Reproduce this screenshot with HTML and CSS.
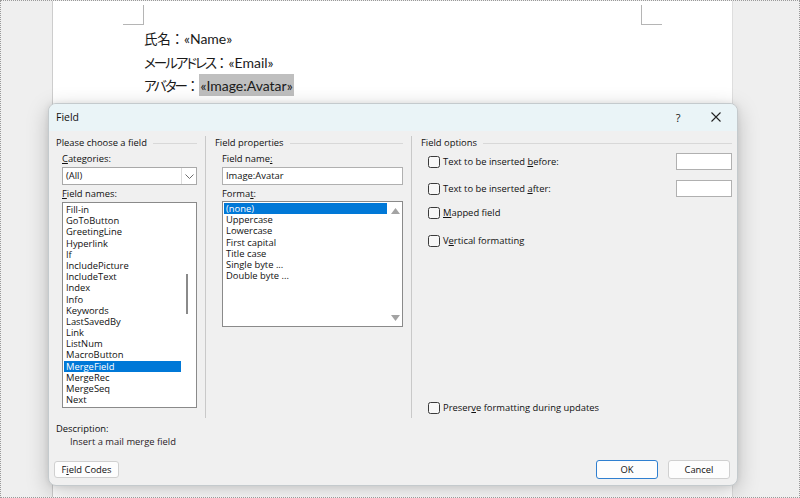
FILE: index.html
```html
<!DOCTYPE html>
<html lang="ja">
<head>
<meta charset="utf-8">
<title>Field</title>
<link rel="stylesheet" href="styles.css">
</head>
<body>
<div class="screen">
  <div class="page">
    <div class="marks"><span class="mark mark-l"></span><span class="mark mark-r"></span></div>
    <div class="doc">
      <p><span class="kanji">氏名</span><span class="colon">：</span>«Name»</p>
      <p><span class="kana">メールアドレス</span><span class="colon">：</span>«Email»</p>
      <p><span class="kana">アバター</span><span class="colon">：</span><span class="hl">«Image:Avatar»</span></p>
    </div>
  </div>

  <div class="dialog">
    <div class="titlebar">
      <span class="title">Field</span>
      <span class="tb-btn help">?</span>
      <span class="tb-btn close"><svg width="10" height="10" viewBox="0 0 10 10"><path d="M0.5 0.5 L9.5 9.5 M9.5 0.5 L0.5 9.5" stroke="#222" stroke-width="1.1" fill="none"/></svg></span>
    </div>
    <div class="body">
      <div class="cols">
        <div class="col col1">
          <div class="grp-head"><span>Please choose a field</span><i></i></div>
          <div class="lbl"><u>C</u>ategories:</div>
          <div class="combo"><span class="combo-val">(All)</span><span class="combo-btn"><svg width="9" height="5" viewBox="0 0 9 5"><path d="M0.5 0.5 L4.5 4.5 L8.5 0.5" stroke="#6d6d6d" stroke-width="1" fill="none"/></svg></span></div>
          <div class="lbl"><u>F</u>ield names:</div>
          <div class="listbox names">
            <ul class="items">
              <li>Fill-in</li>
              <li>GoToButton</li>
              <li>GreetingLine</li>
              <li>Hyperlink</li>
              <li>If</li>
              <li>IncludePicture</li>
              <li>IncludeText</li>
              <li>Index</li>
              <li>Info</li>
              <li>Keywords</li>
              <li>LastSavedBy</li>
              <li>Link</li>
              <li>ListNum</li>
              <li>MacroButton</li>
              <li class="sel">MergeField</li>
              <li>MergeRec</li>
              <li>MergeSeq</li>
              <li>Next</li>
            </ul>
            <div class="vscroll"><span class="thumb"></span></div>
          </div>
        </div>

        <div class="col col2">
          <div class="grp-head"><span>Field properties</span><i></i></div>
          <div class="lbl">Field name<u>:</u></div>
          <div class="input wide">Image:Avatar</div>
          <div class="lbl">Forma<u>t</u>:</div>
          <div class="listbox formats">
            <ul class="items">
              <li class="sel">(none)</li>
              <li>Uppercase</li>
              <li>Lowercase</li>
              <li>First capital</li>
              <li>Title case</li>
              <li>Single byte ...</li>
              <li>Double byte ...</li>
            </ul>
            <div class="vscroll arrows">
              <svg width="9" height="6" viewBox="0 0 9 6"><path d="M0 6 L4.5 0 L9 6 Z" fill="#a3a3a3"/></svg>
              <svg width="9" height="6" viewBox="0 0 9 6"><path d="M0 0 L4.5 6 L9 0 Z" fill="#a3a3a3"/></svg>
            </div>
          </div>
        </div>

        <div class="col col3">
          <div class="grp-head"><span>Field options</span><i></i></div>
          <div class="opt first"><span class="cb"></span><span class="opt-text">Text to be inserted <u>b</u>efore:</span><span class="input small"></span></div>
          <div class="opt second"><span class="cb"></span><span class="opt-text">Text to be inserted <u>a</u>fter:</span><span class="input small"></span></div>
          <div class="opt third"><span class="cb"></span><span class="opt-text"><u>M</u>apped field</span></div>
          <div class="opt fourth"><span class="cb"></span><span class="opt-text">V<u>e</u>rtical formatting</span></div>
          <div class="opt last"><span class="cb"></span><span class="opt-text">Preser<u>v</u>e formatting during updates</span></div>
        </div>
      </div>

      <div class="desc">
        <div class="desc-lbl">Description:</div>
        <div class="desc-text">Insert a mail merge field</div>
      </div>

      <div class="footer">
        <span class="btn codes">F<u>i</u>eld Codes</span>
        <span class="spacer"></span>
        <span class="btn ok">OK</span>
        <span class="btn cancel">Cancel</span>
      </div>
    </div>
  </div>
</div>
</body>
</html>
```

FILE: styles.css
```css
* { box-sizing: border-box; }
html, body { margin: 0; padding: 0; }
body { width: 800px; height: 498px; overflow: hidden; background: #efefef; }
u { text-decoration: underline; text-underline-offset: 1px; }

.screen {
  position: relative;
  width: 800px;
  height: 498px;
  border: 1px dotted #9a9a9a;
  background: #efefef;
  overflow: hidden;
}

/* document page */
.page {
  margin-left: 51px;
  width: 681px;
  height: 100%;
  background: #fff;
  border-left: 1px solid #cdcdcd;
  border-right: 1px solid #dedede;
}
.marks {
  display: flex;
  padding-left: 70px;
  gap: 497px;
}
.mark {
  display: block;
  margin-top: 4px;
  width: 21px;
  height: 20px;
  border-bottom: 1px solid #b5b5b5;
}
.mark-l { border-right: 1px solid #b5b5b5; }
.mark-r { border-left: 1px solid #b5b5b5; }

.doc {
  padding-left: 91px;
  margin-top: 2px;
  font-family: "Lato", "Noto Sans CJK JP", sans-serif;
  font-size: 14px;
  color: #1a1a1a;
}
.doc p { margin: 0; line-height: 23.5px; height: 23.5px; }
.kanji { font-size: 13.5px; letter-spacing: -0.3px; }
.kana { font-size: 13.5px; font-feature-settings: "palt"; letter-spacing: -2px; }
.colon { font-family: "Noto Sans CJK JP", sans-serif; font-size: 13.5px; }
.hl { background: #bfbfbf; padding: 3px 1px 2px; }

/* dialog */
.dialog {
  position: absolute;
  left: 47px;
  top: 102px;
  width: 690px;
  height: 383px;
  border: 1px solid #c4cacd;
  border-radius: 8px;
  background: #f0f0f0;
  box-shadow: 0 6px 22px rgba(0,0,0,0.22), 0 0 6px rgba(0,0,0,0.08);
  overflow: hidden;
  font-family: "Open Sans", "Liberation Sans", sans-serif;
  font-size: 9.4px;
  color: #111;
}
.titlebar {
  display: flex;
  align-items: center;
  height: 27px;
  padding-left: 7px;
  padding-bottom: 1px;
  background: #eaf4f7;
}
.title { font-size: 10.5px; flex: 1; }
.tb-btn { width: 20px; display: flex; justify-content: center; align-items: center; }
.help { font-size: 11px; margin-right: 18px; }
.close { margin-right: 11px; }

.body { padding: 5px 5px 0 7px; }
.cols {
  display: grid;
  grid-template-columns: 149px 206px 1fr;
  height: 282px;
}
.col { display: flex; flex-direction: column; }
.col2 { border-left: 1px solid #c9c9c9; padding-left: 9px; padding-right: 8px; }
.col3 { border-left: 1px solid #c9c9c9; padding-left: 9px; padding-bottom: 2px; }
.col1 { padding-right: 8px; }

.grp-head {
  display: flex;
  align-items: center;
  gap: 6px;
  height: 14px;
  line-height: 14px;
}
.grp-head i { flex: 1; height: 1px; background: #d8d8d8; }

.lbl { height: 14px; line-height: 14px; margin-top: 2px; margin-left: 6px; }
.col2 .lbl { margin-left: 7px; }

.combo {
  display: flex;
  margin-top: 1px;
  margin-left: 6px;
  width: 135px;
  height: 18px;
  background: #fff;
  border: 1px solid #a9a9a9;
}
.combo-val { flex: 1; padding-left: 3px; line-height: 16px; }
.combo-btn {
  width: 15px;
  border-left: 1px solid #dcdcdc;
  display: flex;
  justify-content: center;
  align-items: center;
}

.listbox {
  display: flex;
  background: #fff;
  border: 1px solid #8a8a8a;
}
.names { margin-top: 1px; margin-left: 6px; width: 135px; height: 206px; }
.formats { margin-left: 7px; width: 181px; height: 126px; }
.items {
  list-style: none;
  margin: 0;
  padding: 1px 0 0 1px;
  flex: 1;
  overflow: hidden;
}
.items li { height: 11.2px; line-height: 11.2px; padding-left: 2px; white-space: nowrap; }
.items li.sel { background: #0078d7; color: #fff; }
.vscroll { width: 15px; position: relative; background: #fff; }
.thumb {
  position: absolute;
  left: 5px;
  top: 71px;
  width: 2px;
  height: 40px;
  background: #8a8a8a;
}
.arrows {
  display: flex;
  flex-direction: column;
  justify-content: space-between;
  align-items: center;
  padding: 6px 0 5px 1px;
}

.input {
  display: block;
  background: #fff;
  border: 1px solid #b0b0b0;
}
.wide {
  margin-top: 1px;
  margin-left: 7px;
  width: 181px;
  height: 18px;
  line-height: 16px;
  padding-left: 3px;
}
.small { width: 56px; height: 17px; margin-left: auto; }

.opt {
  display: flex;
  align-items: center;
  height: 17px;
  margin-left: 7px;
}
.opt.first { margin-top: 3px; }
.opt.second { margin-top: 10px; }
.opt.third { margin-top: 7px; }
.opt.fourth { margin-top: 11px; }
.opt.last { margin-top: auto; }
.cb {
  width: 12px;
  height: 12px;
  border: 1px solid #3a3a3a;
  border-radius: 2.5px;
  background: #f7f7f7;
  margin-right: 3px;
  flex: none;
}

.desc { margin-top: 4px; }
.desc-lbl, .desc-text { height: 13px; line-height: 13px; }
.desc-text { padding-left: 14px; color: #2a1c28; }

.footer {
  display: flex;
  align-items: center;
  margin-top: 12px;
  padding-right: 2px;
  margin-left: -2px;
}
.spacer { flex: 1; }
.btn {
  display: flex;
  justify-content: center;
  align-items: center;
  background: #fdfdfd;
  border: 1px solid #d0d0d0;
  border-radius: 3px;
}
.codes { width: 65px; height: 17px; }
.ok { width: 62px; height: 19px; border-color: #2f7fd0; }
.cancel { width: 62px; height: 19px; margin-left: 10px; }
```
